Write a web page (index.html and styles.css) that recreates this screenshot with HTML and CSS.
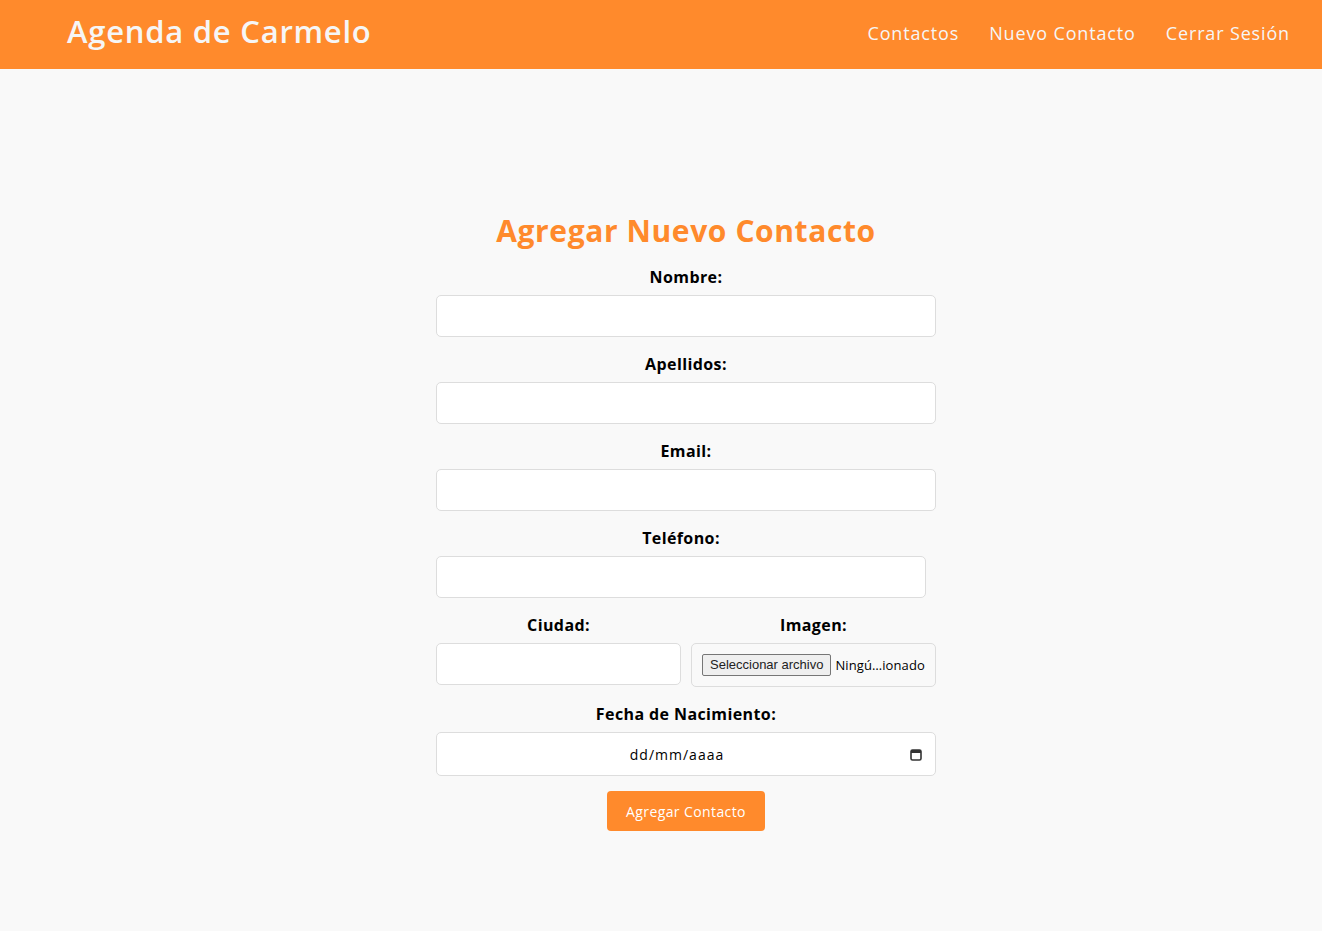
FILE: index.html
```html
<!DOCTYPE html>
<html lang="es">
<head>
<meta charset="utf-8">
<title>Agenda de Carmelo</title>
<link rel="stylesheet" href="styles.css">
</head>
<body>
<header class="topbar">
  <h1 class="brand">Agenda de Carmelo</h1>
  <nav class="nav">
    <a href="#">Contactos</a>
    <a href="#">Nuevo Contacto</a>
    <a href="#">Cerrar Sesión</a>
  </nav>
</header>
<main class="main">
  <form class="form">
    <h2 class="title">Agregar Nuevo Contacto</h2>
    <div class="field">
      <label class="label">Nombre:</label>
      <input class="input" type="text">
    </div>
    <div class="field">
      <label class="label">Apellidos:</label>
      <input class="input" type="text">
    </div>
    <div class="field">
      <label class="label">Email:</label>
      <input class="input" type="text">
    </div>
    <div class="field field-short">
      <label class="label">Teléfono:</label>
      <input class="input" type="text">
    </div>
    <div class="row">
      <div class="field">
        <label class="label">Ciudad:</label>
        <input class="input" type="text">
      </div>
      <div class="field">
        <label class="label">Imagen:</label>
        <div class="file">
          <span class="file-btn">Seleccionar archivo</span>
          <span class="file-name">Ningú…ionado</span>
        </div>
      </div>
    </div>
    <div class="field">
      <label class="label">Fecha de Nacimiento:</label>
      <div class="date">
        <span class="date-text">dd/mm/aaaa</span>
        <svg class="date-icon" width="12" height="13" viewBox="0 0 12 13"><rect x="1" y="2" width="10" height="10" rx="1.5" fill="none" stroke="#333" stroke-width="1.6"/><rect x="1" y="2" width="10" height="3" fill="#333"/></svg>
      </div>
    </div>
    <div class="actions">
      <button class="submit" type="button">Agregar Contacto</button>
    </div>
  </form>
</main>
</body>
</html>
```

FILE: styles.css
```css
* { box-sizing: border-box; }
body {
  margin: 0;
  background: #f9f9f9;
  font-family: "Open Sans", "DejaVu Sans", sans-serif;
  color: #000;
}
.topbar {
  height: 69px;
  background: #ff8a2c;
  display: flex;
  align-items: center;
  justify-content: space-between;
  padding: 0 32px 0 67px;
}
.brand {
  margin: 0;
  font-size: 31px;
  font-weight: 600;
  letter-spacing: 0.75px;
  color: #f6f6f6;
  position: relative;
  top: -4px;
}
.nav {
  display: flex;
  gap: 30px;
  position: relative;
  top: -2px;
}
.nav a {
  color: #f6f6f6;
  text-decoration: none;
  font-size: 18px;
  letter-spacing: 0.85px;
}
.main {
  display: flex;
  justify-content: center;
  padding: 140px 0 0 50px;
}
.form {
  width: 500px;
  display: flex;
  flex-direction: column;
}
.title {
  margin: 0 0 12px;
  text-align: center;
  color: #ff8a2c;
  font-size: 30px;
  font-weight: 700;
  letter-spacing: 0.6px;
  line-height: 44px;
}
.field {
  display: flex;
  flex-direction: column;
  margin-bottom: 15px;
  min-width: 0;
}
.field-short { width: 490px; }
.label {
  text-align: center;
  font-weight: 700;
  font-size: 16px;
  letter-spacing: 0.4px;
  line-height: 24px;
  margin-bottom: 6px;
}
.input {
  height: 42px;
  border: 1px solid #ddd;
  border-radius: 5px;
  background: #fff;
  width: 100%;
}
.row {
  display: grid;
  grid-template-columns: minmax(0, 1fr) minmax(0, 1fr);
  gap: 10px;
}
.file {
  height: 44px;
  border: 1px solid #ddd;
  border-radius: 5px;
  display: flex;
  align-items: center;
  padding: 0 10px;
  white-space: nowrap;
  overflow: hidden;
}
.file-btn {
  border: 1px solid #767676;
  background: #efefef;
  border-radius: 2px;
  padding: 2px 7px;
  margin-right: 4px;
  font-family: "Liberation Sans", Arial, sans-serif;
  font-size: 13px;
  line-height: 16px;
  color: #222;
}
.file-name {
  font-family: "Open Sans", sans-serif;
  font-size: 13px;
  letter-spacing: 0.1px;
}
.date {
  position: relative;
  height: 44px;
  border: 1px solid #ddd;
  border-radius: 5px;
  background: #fff;
  display: flex;
  align-items: center;
  justify-content: center;
  padding-right: 18px;
  font-size: 14px;
  letter-spacing: 1px;
}
.date-icon {
  position: absolute;
  right: 13px;
  top: 15px;
}
.actions {
  display: flex;
  justify-content: center;
}
.submit {
  width: 158px;
  height: 40px;
  border: none;
  border-radius: 4px;
  background: #ff8a2c;
  color: #fff;
  font-family: "Open Sans", sans-serif;
  font-size: 14px;
  font-weight: 400;
  letter-spacing: 0.4px;
}
```
